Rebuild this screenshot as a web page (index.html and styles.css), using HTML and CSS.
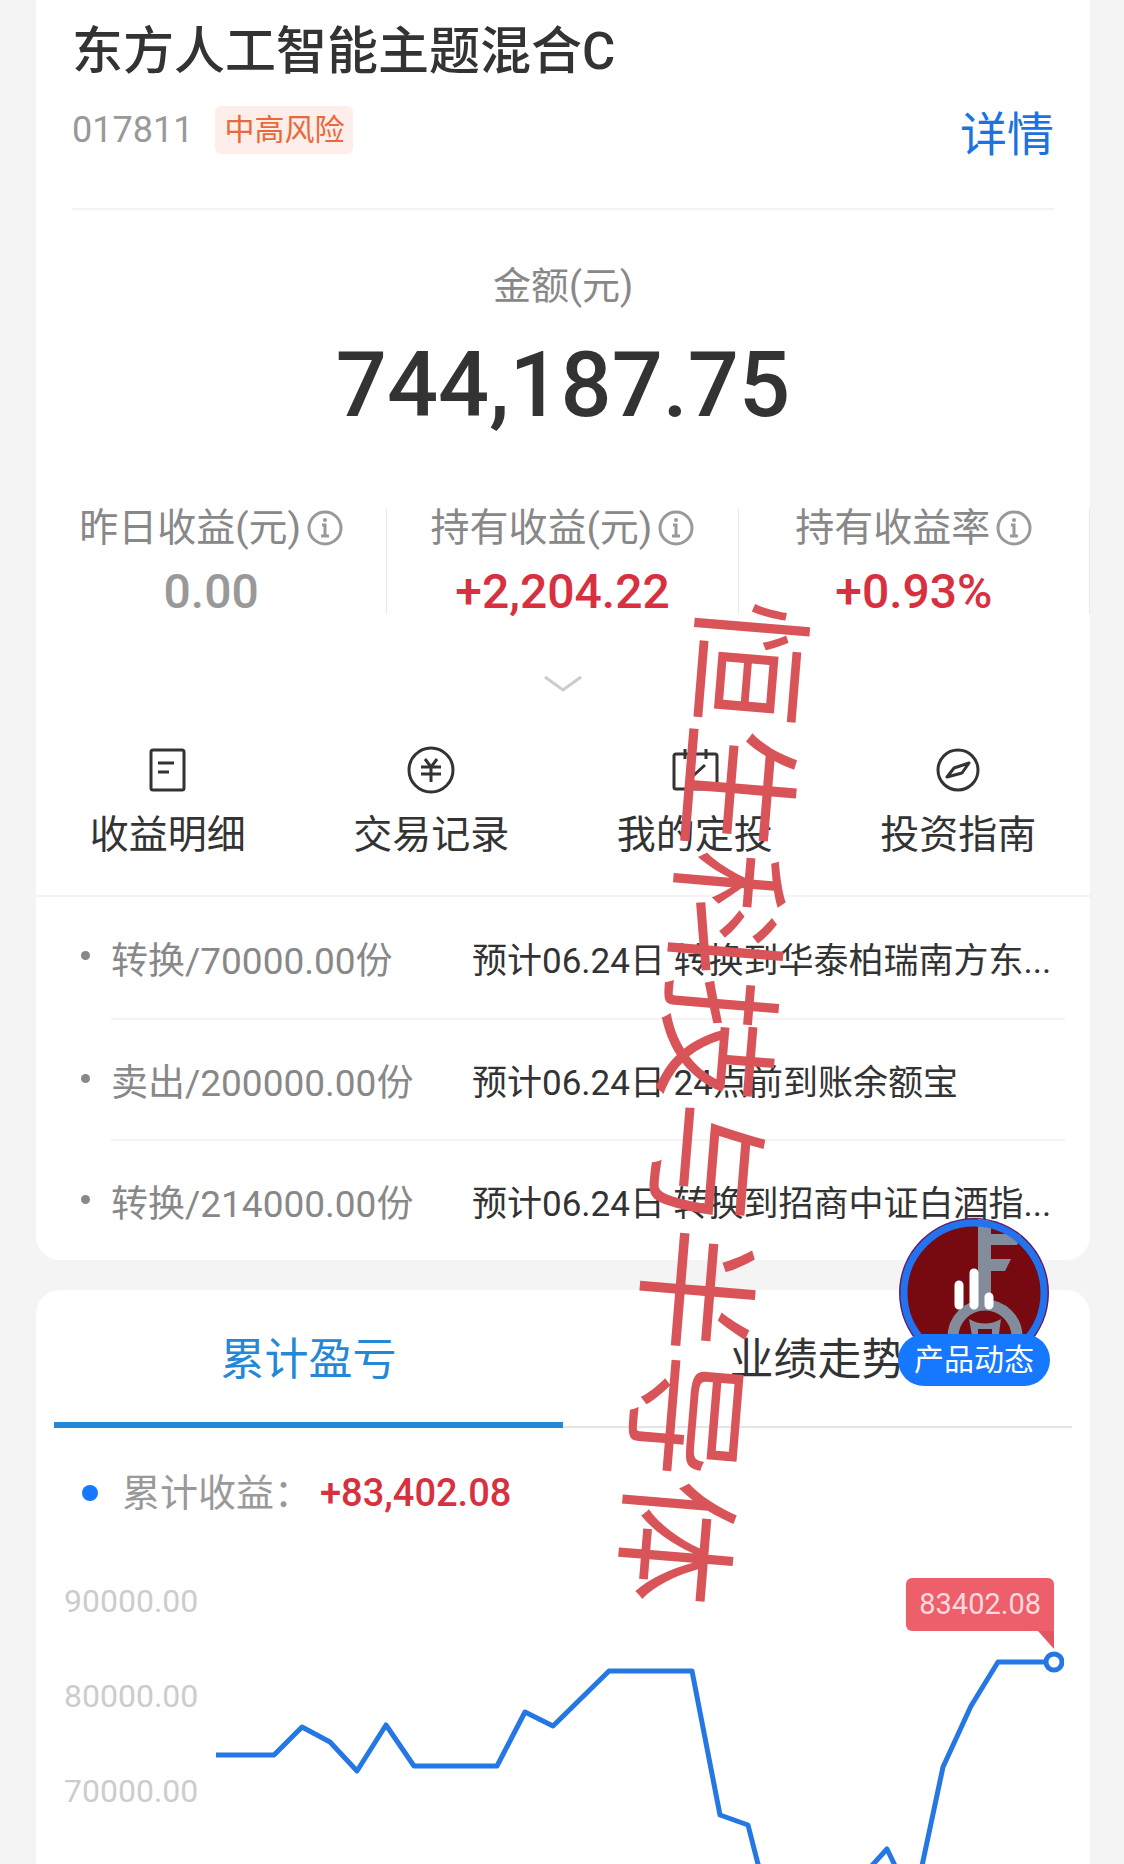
FILE: index.html
```html
<!DOCTYPE html>
<html lang="zh-CN">
<head>
    <meta charset="UTF-8">
    <meta name="viewport" content="width=device-width, initial-scale=1.0">
    <title>东方人工智能主题混合C</title>
    <link rel="stylesheet" href="styles.css">
</head>
<body>
    <main class="page">
        <section class="card fund">
            <header class="fund-head">
                <h1>东方人工智能主题混合C</h1>
                <div class="fund-meta">
                    <span class="fund-code">017811</span>
                    <span class="risk">中高风险</span>
                    <a class="detail" href="#">详情</a>
                </div>
            </header>

            <div class="amount">
                <p class="amount-label">金额(元)</p>
                <p class="amount-value">744,187.75</p>
            </div>

            <div class="stats">
                <div class="stat">
                    <p class="stat-label">昨日收益(元)
                        <svg class="info" viewBox="0 0 36 36"><circle cx="18" cy="18" r="16"/><path d="M15 15h3v11M14 26h8"/><circle class="dot" cx="18" cy="10" r="2"/></svg>
                    </p>
                    <p class="stat-value muted">0.00</p>
                </div>
                <div class="stat">
                    <p class="stat-label">持有收益(元)
                        <svg class="info" viewBox="0 0 36 36"><circle cx="18" cy="18" r="16"/><path d="M15 15h3v11M14 26h8"/><circle class="dot" cx="18" cy="10" r="2"/></svg>
                    </p>
                    <p class="stat-value">+2,204.22</p>
                </div>
                <div class="stat">
                    <p class="stat-label">持有收益率
                        <svg class="info" viewBox="0 0 36 36"><circle cx="18" cy="18" r="16"/><path d="M15 15h3v11M14 26h8"/><circle class="dot" cx="18" cy="10" r="2"/></svg>
                    </p>
                    <p class="stat-value">+0.93%</p>
                </div>
            </div>

            <button class="more" type="button" aria-label="展开">
                <svg viewBox="0 0 40 18"><path d="M2 2l18 13L38 2"/></svg>
            </button>

            <nav class="actions">
                <a href="#">
                    <svg viewBox="0 0 48 48"><rect x="7" y="4" width="33" height="40" rx="2"/><path d="M14 17h16M14 26h11"/></svg>
                    收益明细
                </a>
                <a href="#">
                    <svg viewBox="0 0 48 48"><circle cx="24" cy="24" r="22"/><path d="M18 13l6 8 6-8M14 21h20M14 28h20M24 21v15"/></svg>
                    交易记录
                </a>
                <a href="#">
                    <svg viewBox="0 0 48 48"><rect x="3" y="8" width="43" height="35" rx="2"/><path d="M14 3v10M35 3v10M17 24l5 6 12-11"/></svg>
                    我的定投
                </a>
                <a href="#">
                    <svg viewBox="0 0 48 48"><circle cx="24" cy="24" r="20"/><path d="M35 17l-7 10-15 4 7-9z"/></svg>
                    投资指南
                </a>
            </nav>

            <ul class="orders">
                <li><span class="order-type">转换/70000.00份</span><span class="order-info">预计06.24日 转换到华泰柏瑞南方东...</span></li>
                <li><span class="order-type">卖出/200000.00份</span><span class="order-info">预计06.24日 24点前到账余额宝</span></li>
                <li><span class="order-type">转换/214000.00份</span><span class="order-info">预计06.24日 转换到招商中证白酒指...</span></li>
            </ul>
        </section>

        <section class="card trend">
            <div class="tabs" role="tablist">
                <button class="tab active" type="button" role="tab" aria-selected="true">累计盈亏</button>
                <button class="tab" type="button" role="tab" aria-selected="false">业绩走势</button>
            </div>
            <p class="legend"><span>累计收益：</span><strong>+83,402.08</strong></p>
            <div class="chart">
                <ul class="axis">
                    <li>90000.00</li>
                    <li>80000.00</li>
                    <li>70000.00</li>
                </ul>
                <div class="plot">
                    <svg viewBox="0 0 858 310">
                        <polyline points="10,201 68,201 96,173 124,188 151,217 180,171 208,212 291,212 319,158 347,172 403,117 486,117 514,261 542,271 552,310 570,370 640,340 681,295 692,318 710,340 737,213 765,152 792,108 848,108"/>
                        <circle cx="848" cy="108" r="8"/>
                    </svg>
                    <span class="tip">83402.08</span>
                </div>
            </div>

            <button class="float" type="button">
                <svg viewBox="0 0 150 150">
                    <clipPath id="disc"><circle cx="75" cy="75" r="74"/></clipPath>
                    <circle cx="75" cy="75" r="75" fill="#5d1d66"/>
                    <circle cx="75" cy="75" r="73" fill="#760a10"/>
                    <g clip-path="url(#disc)" fill="#838c9b">
                        <path d="M79 0h13v16h31l-5 11H92v14h20l-6 12H92v34H79z"/>
                        <circle cx="86" cy="119" r="32" fill="none" stroke="#838c9b" stroke-width="11"/>
                        <path d="M70 101q16 9 32 0l-3 22H74z"/>
                        <path d="M79 111h14v12H79z" fill="#760a10"/>
                    </g>
                    <circle cx="75" cy="75" r="70" fill="none" stroke="#2473ee" stroke-width="7"/>
                    <path d="M60 67v20M75 55v32M90 79v8" stroke="#fff" stroke-width="9" stroke-linecap="round"/>
                </svg>
                <span>产品动态</span>
            </button>
        </section>

        <p class="stamp">恒生科技与半导体</p>
    </main>
</body>
</html>
```
FILE: styles.css
```css
* {
    box-sizing: border-box;
}
body {
    margin: 0;
    background-color: #f4f4f4;
    color: #333;
    font-family: Roboto, "Noto Sans CJK SC", sans-serif;
}
h1, p, ul {
    margin: 0;
    padding: 0;
}
ul {
    list-style: none;
}
a {
    color: inherit;
    text-decoration: none;
}
button {
    padding: 0;
    border: none;
    background: none;
    color: inherit;
    font-family: inherit;
    cursor: pointer;
}
svg {
    display: block;
}
.page {
    position: relative;
    padding: 0 34px 0 36px;
    overflow: hidden;
}
.card {
    background-color: #fff;
    border-radius: 24px;
}

/* fund header */
.fund {
    border-radius: 0 0 24px 24px;
}
.fund-head {
    margin: 0 36px;
    padding: 18px 0 48px;
    border-bottom: 2px solid #f3f3f3;
}
h1 {
    font-size: 51px;
    font-weight: 500;
    line-height: 68px;
}
.fund-meta {
    display: flex;
    align-items: center;
    height: 52px;
    margin: 18px 0 4px;
}
.fund-code {
    color: #999;
    font-size: 36px;
}
.risk {
    margin-left: 22px;
    padding: 0 9px;
    border-radius: 6px;
    background-color: #fdeee9;
    color: #e8693c;
    font-size: 30px;
    line-height: 48px;
}
.detail {
    margin-left: auto;
    color: #1a73e0;
    font-size: 47px;
}

.amount {
    padding-top: 46px;
    text-align: center;
}
.amount-label {
    color: #888;
    font-size: 38px;
    line-height: 60px;
}
.amount-value {
    margin-top: 22px;
    font-size: 90px;
    font-weight: 500;
    line-height: 96px;
}

.stats {
    display: grid;
    grid-template-columns: repeat(3, 1fr);
    margin-top: 74px;
}
.stat {
    border-right: 1px solid #e8e8e8;
    text-align: center;
}
.stat-label {
    display: flex;
    justify-content: center;
    align-items: center;
    gap: 6px;
    color: #888;
    font-size: 39px;
    line-height: 40px;
}
.stat-value {
    margin-top: 22px;
    color: #d7303f;
    font-size: 48px;
    font-weight: 500;
    line-height: 44px;
}
.stat-value.muted {
    color: #999;
}
.info {
    width: 36px;
    height: 36px;
    fill: none;
    stroke: #999;
    stroke-width: 3;
}
.info .dot {
    fill: #999;
    stroke: none;
}

.more {
    display: block;
    margin: 61px auto 0;
}
.more svg {
    width: 40px;
    height: 18px;
    fill: none;
    stroke: #ccc;
    stroke-width: 3;
}
.actions {
    display: grid;
    grid-template-columns: repeat(4, 1fr);
    padding: 53px 0 34px;
    border-bottom: 2px solid #f3f3f3;
}
.actions a {
    display: flex;
    flex-direction: column;
    align-items: center;
    gap: 15px;
    font-size: 39px;
    line-height: 52px;
}
.actions svg {
    width: 48px;
    height: 48px;
    fill: none;
    stroke: #333;
    stroke-width: 3;
    stroke-linejoin: round;
}

/* pending orders */
.orders {
    padding: 0 25px 0 75px;
}
.orders li {
    position: relative;
    display: grid;
    grid-template-columns: 361px 1fr;
    align-items: center;
    height: 121px;
    white-space: nowrap;
}
.orders li + li {
    border-top: 2px solid #f3f3f3;
}
.orders li::before {
    content: "";
    position: absolute;
    left: -30px;
    top: 54px;
    width: 9px;
    height: 9px;
    border-radius: 50%;
    background-color: #888;
}
.order-type {
    color: #888;
    font-size: 37px;
}
.order-info {
    font-size: 35px;
}

/* profit trend */
.trend {
    position: relative;
    margin-top: 30px;
    border-radius: 24px 24px 0 0;
}
.tabs {
    display: grid;
    grid-template-columns: 1fr 1fr;
    margin: 0 18px;
}
.tab {
    height: 138px;
    padding-bottom: 4px;
    border-bottom: 2px solid #e4e4e4;
    font-size: 44px;
}
.tab.active {
    padding-bottom: 0;
    border-bottom: 6px solid #2488d6;
    color: #2488d6;
}
.legend {
    display: flex;
    align-items: center;
    padding: 37px 0 33px 46px;
    color: #999;
    font-size: 38px;
    line-height: 56px;
}
.legend::before {
    content: "";
    width: 16px;
    height: 16px;
    margin-right: 24px;
    border-radius: 50%;
    background-color: #1677ff;
}
.legend strong {
    margin-left: 8px;
    color: #d7303f;
    font-weight: 500;
}
.chart {
    display: grid;
    grid-template-columns: 142px 1fr;
    padding: 0 26px 0 28px;
}
.axis {
    color: #ccc;
    font-size: 32px;
    line-height: 95px;
}
.plot {
    position: relative;
}
.plot svg {
    width: 100%;
    fill: none;
    stroke: #2577e3;
    stroke-width: 5;
    stroke-linejoin: round;
}
.plot circle {
    fill: #fff;
}
.tip {
    position: absolute;
    top: 24px;
    right: 10px;
    padding: 0 13px;
    border-radius: 6px 6px 0 6px;
    background-color: #ec5f6b;
    color: #ffdadd;
    font-size: 29px;
    line-height: 53px;
}
.tip::after {
    content: "";
    position: absolute;
    top: 100%;
    right: 0;
    border-top: 18px solid #e25562;
    border-left: 16px solid transparent;
}

.float {
    position: absolute;
    top: -72px;
    right: 40px;
    width: 152px;
}
.float svg {
    width: 150px;
    height: 150px;
    margin: 0 auto;
}
.float span {
    position: relative;
    display: block;
    margin-top: -34px;
    border-radius: 26px;
    background-color: #1677ff;
    color: #fff;
    font-size: 30px;
    line-height: 52px;
}

/* text running down the page */
.stamp {
    position: absolute;
    top: 1102px;
    left: 63%;
    color: #d95459;
    font-size: 126px;
    line-height: 1;
    white-space: nowrap;
    transform: translate(-50%, -50%) rotate(94.7deg);
}
```
